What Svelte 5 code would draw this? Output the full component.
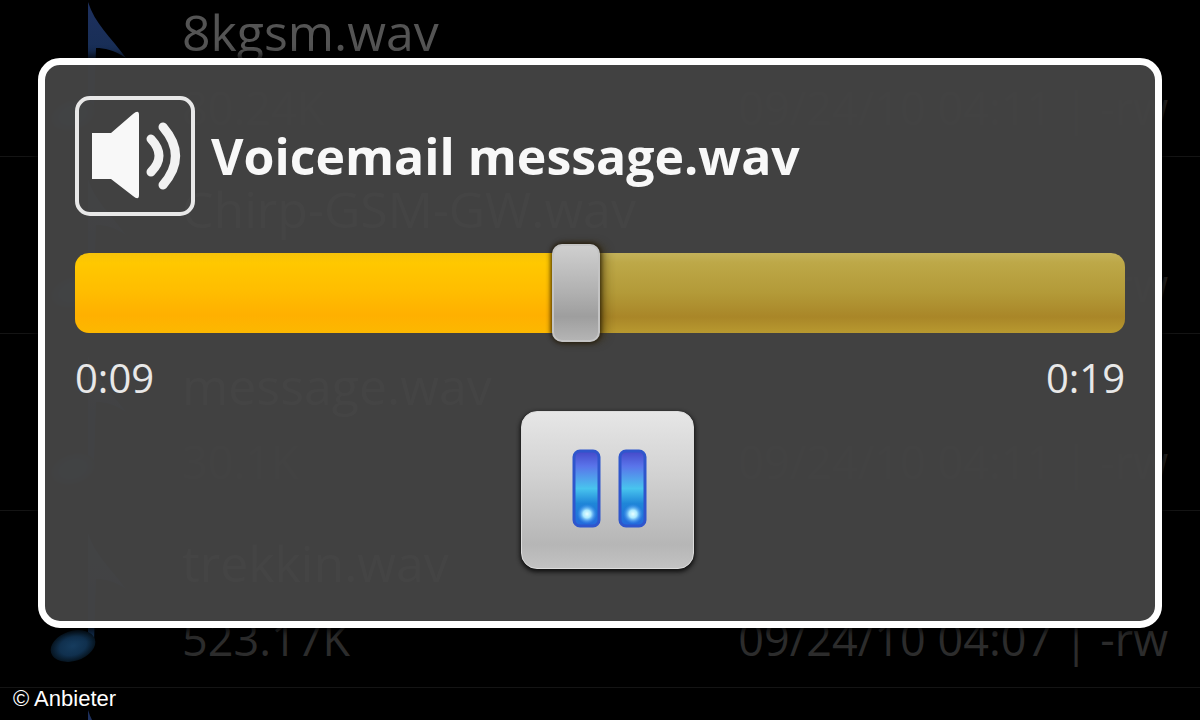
<script>
  const files = [
    { name: '8kgsm.wav', size: '80.24K', meta: '09/24/10 04:11 | -rw' },
    { name: 'Chirp-GSM-GW.wav', size: '12.6K', meta: '09/24/10 04:10 | -rw' },
    { name: 'message.wav', size: '30.1K', meta: '09/24/10 04:11 | -rw' },
    { name: 'trekkin.wav', size: '523.17K', meta: '09/24/10 04:07 | -rw' },
    { name: 'Voicemail message.wav', size: '30.1K', meta: '09/24/10 04:07 | -rw' },
  ];

  const duration = 19000;
  let position = 9050;
  let playing = true;

  // centre of the 48px thumb, as a length along the track
  $: ratio = position / duration;
  $: fill = `calc(24px + (100% - 48px) * ${ratio})`;

  function clock(ms) {
    const s = Math.floor(ms / 1000);
    return `${Math.floor(s / 60)}:${String(s % 60).padStart(2, '0')}`;
  }
</script>

<div class="screen">
  <ul class="files">
    {#each files as f (f.name)}
      <li>
        <svg class="note" viewBox="0 0 100 140" aria-hidden="true">
          <defs>
            <linearGradient id="note-fill" x1="0" y1="0" x2="0" y2="1">
              <stop offset="0" stop-color="#1e305e" />
              <stop offset="1" stop-color="#102c4c" />
            </linearGradient>
            <radialGradient id="note-head">
              <stop offset="0" stop-color="#163c5e" />
              <stop offset="0.6" stop-color="#10304e" />
              <stop offset="1" stop-color="#061420" />
            </radialGradient>
          </defs>
          <path d="M48 4 C55 26 70 38 86 60 C74 52 64 50 56 50 L54 114 L48 114 Z" fill="url(#note-fill)" />
          <ellipse cx="33" cy="117" rx="23" ry="15" transform="rotate(-18 33 117)" fill="url(#note-head)" />
        </svg>
        <div class="text">
          <span class="name">{f.name}</span>
          <div class="info">
            <span>{f.size}</span>
            <span>{f.meta}</span>
          </div>
        </div>
      </li>
    {/each}
  </ul>

  <div class="overlay">
    <div class="dialog" role="dialog" aria-labelledby="track-title">
      <header>
        <svg class="speaker" viewBox="0 0 120 120" aria-hidden="true">
          <rect x="2" y="2" width="116" height="116" rx="13" fill="none" stroke="#e8e8e8" stroke-width="4" />
          <path d="M17 37 H36 L58 18 Q64 13 64 19 V99 Q64 105 58 100 L36 83 H17 Z" fill="#f8f8f8" />
          <path d="M76 43 Q92 60 76 76" fill="none" stroke="#f2f2f2" stroke-width="9" stroke-linecap="round" />
          <path d="M88 31 Q113 60 88 89" fill="none" stroke="#f2f2f2" stroke-width="9" stroke-linecap="round" />
        </svg>
        <h1 id="track-title">Voicemail message.wav</h1>
      </header>

      <input
        class="seek"
        type="range"
        min="0"
        max={duration}
        bind:value={position}
        aria-label="Position"
        style="--fill: {fill}"
      />

      <div class="times">
        <span>{clock(position)}</span>
        <span>{clock(duration)}</span>
      </div>

      <div class="controls">
        <button type="button" aria-label={playing ? 'Pause' : 'Play'} on:click={() => (playing = !playing)}>
          <svg viewBox="0 0 80 84" aria-hidden="true">
            <defs>
              <linearGradient id="bar-fill" x1="0" y1="0" x2="0" y2="1">
                <stop offset="0" stop-color="#4448c8" />
                <stop offset="0.2" stop-color="#5a74ea" />
                <stop offset="0.5" stop-color="#48c4ee" />
                <stop offset="0.7" stop-color="#1f86d8" />
                <stop offset="1" stop-color="#2468dc" />
              </linearGradient>
              <radialGradient id="bar-glow">
                <stop offset="0" stop-color="#e8ffff" />
                <stop offset="0.4" stop-color="#a8e8ff" />
                <stop offset="1" stop-color="#3a90f0" stop-opacity="0" />
              </radialGradient>
            </defs>
            {#if playing}
              {#each [7, 53] as x}
                <rect {x} y="3" width="25" height="75" rx="6" fill="url(#bar-fill)" stroke="#2f56cc" stroke-width="3" />
                <circle cx={x + 13} cy="66" r="10" fill="url(#bar-glow)" />
              {/each}
            {:else}
              <path d="M12 6 L72 42 L12 78 Z" fill="url(#bar-fill)" stroke="#2f56cc" stroke-width="3" stroke-linejoin="round" />
            {/if}
          </svg>
        </button>
      </div>
    </div>
  </div>

  <small class="credit">© Anbieter</small>
</div>

<style>
  :global(body) { background: #000; }
  .screen {
    position: relative; overflow: hidden;
    height: 100vh; background: #000;
    font-family: "Open Sans", "Noto Sans", sans-serif;
  }

  .files { list-style: none; margin: -20px 0 0; padding: 0; }
  li {
    display: flex; gap: 42px;
    padding: 18px 32px 14px 40px;
    border-bottom: 1px solid #141414;
  }
  .note { flex: none; width: 100px; height: 140px; }
  .text { flex: 1; display: grid; gap: 8px; line-height: 68px; white-space: nowrap; }
  .name { font-size: 50px; color: #545454; }
  .info { display: flex; justify-content: space-between; font-size: 45px; color: #2c2c2c; }

  .overlay { position: absolute; inset: 0; padding: 58px 38px; }
  .dialog {
    padding: 31px 30px 52px;
    background: rgba(68, 68, 68, 0.96);
    border: 7px solid #fff; border-radius: 22px;
    box-shadow: 0 0 10px 2px #000;
  }
  header { display: flex; align-items: center; gap: 16px; margin-bottom: 28px; }
  .speaker { flex: none; width: 120px; height: 120px; }
  h1 { margin: 0; font-size: 50px; line-height: 68px; font-weight: 700; color: #f8f8f8; }

  .seek {
    -webkit-appearance: none; appearance: none;
    display: block; width: 100%; height: 98px; margin: 0;
    background: none;
  }
  .seek::-webkit-slider-runnable-track {
    height: 80px; border-radius: 14px;
    background:
      linear-gradient(#f6c20a, #ffc800 12%, #ffbe00 45%, #ffb000 78%, #fcb800) 0 0 / var(--fill) 100% no-repeat,
      linear-gradient(#c4b25a, #bda848 12%, #b39a38 50%, #a98628 80%, #b8992f);
  }
  .seek::-webkit-slider-thumb {
    -webkit-appearance: none; appearance: none;
    width: 48px; height: 98px; margin-top: -9px;
    border: 2px solid #c4c4c4; border-radius: 10px;
    background: linear-gradient(#cfcfcf, #b0b0b0 50%, #9e9e9e 75%, #b4b4b4);
    box-shadow: 0 0 5px 1px rgba(30, 20, 0, 0.9), 6px 0 10px rgba(60, 45, 0, 0.4);
  }

  .times {
    display: flex; justify-content: space-between;
    margin: 10px 0 7px;
    font-size: 40px; line-height: 52px; color: #e8e8e8;
  }

  .controls { display: flex; justify-content: center; padding-left: 14px; }
  button {
    display: grid; place-items: center;
    width: 173px; height: 158px; padding: 0;
    border: 1px solid #dcdcdc; border-radius: 16px;
    background: linear-gradient(#e6e6e6, #d2d2d2 40%, #b6b6b6 85%, #c2c2c2);
    box-shadow: 0 2px 4px 1px #111;
  }
  button svg { width: 80px; height: 84px; }

  .credit {
    position: absolute; left: 13px; bottom: 8px;
    font-family: "Liberation Sans", Arial, sans-serif;
    font-size: 22px; line-height: 26px; color: #fff;
  }
</style>
